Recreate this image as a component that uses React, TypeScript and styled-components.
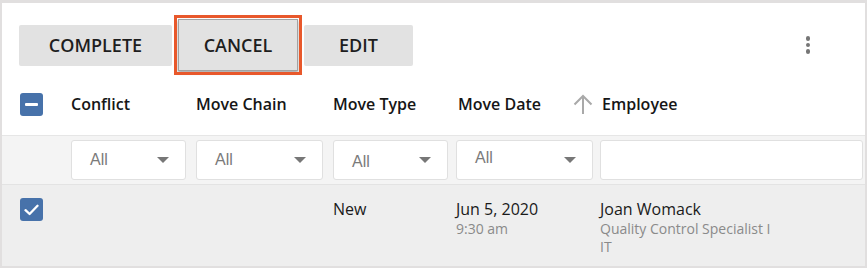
import React from "react";
import styled, { createGlobalStyle } from "styled-components";

const Global = createGlobalStyle`
  html, body { margin: 0; padding: 0; background: #ffffff; }
  body { font-family: "Open Sans", "Liberation Sans", sans-serif; color: #1b1b1b; }
  * { box-sizing: border-box; }
`;

const Frame = styled.div`
  width: 867px;
  height: 268px;
  border: 2px solid #e1dfdf;
  border-top-width: 3px;
  background: #ffffff;
  overflow: hidden;
  display: flex;
  flex-direction: column;
`;

const Toolbar = styled.div`
  display: flex;
  align-items: center;
  gap: 6px;
  height: 77px;
  padding: 16px 0 9px 17px;
`;

const ActionButton = styled.button<{ $focused?: boolean; $w: number }>`
  width: ${(p) => p.$w}px;
  height: ${(p) => (p.$focused ? 52 : 41)}px;
  border-radius: ${(p) => (p.$focused ? 0 : 2)}px;
  border: ${(p) => (p.$focused ? "1px solid #a2a2a2" : "none")};
  background: #e2e2e2;
  font-family: "Open Sans", "Liberation Sans", sans-serif;
  font-weight: 600;
  font-size: 18px;
  color: #1e1e1e;
  padding: 0;
  cursor: pointer;
  box-shadow: ${(p) => (p.$focused ? "0 2px 3px rgba(0,0,0,0.35)" : "none")};
  outline: ${(p) => (p.$focused ? "3px solid #e8582b" : "none")};
  outline-offset: 1px;
`;

const Spacer = styled.div`
  flex: 1;
`;

const Kebab = styled.button`
  width: 24px;
  height: 30px;
  margin-right: 45px;
  border: none;
  background: transparent;
  display: flex;
  flex-direction: column;
  align-items: center;
  justify-content: center;
  gap: 2px;
  padding: 0;
`;

const Dot = styled.span`
  width: 4.5px;
  height: 4.5px;
  border-radius: 50%;
  background: #767676;
`;

const cols = "69px 125px 137px 123px 144px 1fr";

const HeaderRow = styled.div`
  display: grid;
  grid-template-columns: ${cols};
  align-items: center;
  padding: 13px 0 19px;
  border-bottom: 1px solid #e6e6e6;
`;

const CheckCell = styled.div`
  padding-left: 18px;
  display: flex;
`;

const Box = styled.span`
  width: 23px;
  height: 23px;
  border-radius: 3px;
  background: #4772aa;
  display: flex;
  align-items: center;
  justify-content: center;
`;

const HeaderCell = styled.div<{ $indent?: number }>`
  position: relative;
  font-weight: 600;
  font-size: 16px;
  line-height: 23px;
  color: #161616;
  white-space: nowrap;
  padding-left: ${(p) => p.$indent ?? 0}px;
`;

const SortIcon = styled.span`
  position: absolute;
  left: -28px;
  top: 0;
  display: flex;
`;

const FilterRow = styled.div`
  display: grid;
  grid-template-columns: ${cols};
  background: #f4f4f4;
  padding: 4px 0;
  border-bottom: 1px solid #e3e3e3;
`;

const FilterCell = styled.div<{ $gap: number }>`
  padding-right: ${(p) => p.$gap}px;
`;

const Select = styled.div`
  height: 40px;
  background: #ffffff;
  border: 1px solid #e0e0e0;
  border-radius: 3px;
  display: flex;
  align-items: center;
  justify-content: space-between;
  padding: 0 16px 0 18px;
  font-family: "Liberation Sans", Arial, sans-serif;
  font-size: 16px;
  color: #7a7a7a;
`;

const SelectValue = styled.span<{ $shift: number }>`
  transform: translateY(${(p) => p.$shift}px);
`;

const Caret = styled.span`
  width: 0;
  height: 0;
  border-left: 6.5px solid transparent;
  border-right: 6.5px solid transparent;
  border-top: 6px solid #777777;
`;

const DataRow = styled.div`
  flex: 1;
  display: grid;
  grid-template-columns: ${cols};
  align-items: start;
  background: #eeeeee;
  padding-top: 13px;
`;

const DataCell = styled.div`
  font-size: 16px;
  line-height: 22px;
  color: #1a1a1a;
  white-space: nowrap;
`;

const SubLine = styled.div`
  font-size: 14px;
  line-height: 18px;
  color: #8a8a8a;
`;

const Minus = () => (
  <svg width="13" height="3" viewBox="0 0 13 3">
    <rect width="13" height="3" rx="1" fill="#ffffff" />
  </svg>
);

const Check = () => (
  <svg width="15" height="12" viewBox="0 0 15 12">
    <path d="M1.5 6.2 L5.6 10 L13.5 1.8" fill="none" stroke="#ffffff" strokeWidth="2.3" strokeLinecap="round" strokeLinejoin="round" />
  </svg>
);

const ArrowUp = () => (
  <svg width="22" height="23" viewBox="0 0 22 23">
    <path d="M11 21 V3 M2.5 11.5 L11 3 L19.5 11.5" fill="none" stroke="#a9a9a9" strokeWidth="2" />
  </svg>
);

const filters: { gap: number; text?: string; shift: number }[] = [
  { gap: 10, text: "All", shift: 0 },
  { gap: 10, text: "All", shift: 0 },
  { gap: 8, text: "All", shift: 2 },
  { gap: 7, text: "All", shift: -2 },
  { gap: 2, shift: 0 },
];

export default function App() {
  return (
    <>
      <Global />
      <Frame>
        <Toolbar>
          <ActionButton $w={153}>COMPLETE</ActionButton>
          <ActionButton $w={120} $focused>CANCEL</ActionButton>
          <ActionButton $w={109}>EDIT</ActionButton>
          <Spacer />
          <Kebab aria-label="More">
            <Dot />
            <Dot />
            <Dot />
          </Kebab>
        </Toolbar>
        <HeaderRow>
          <CheckCell>
            <Box>
              <Minus />
            </Box>
          </CheckCell>
          <HeaderCell>Conflict</HeaderCell>
          <HeaderCell>Move Chain</HeaderCell>
          <HeaderCell>Move Type</HeaderCell>
          <HeaderCell $indent={2}>Move Date</HeaderCell>
          <HeaderCell $indent={2}>
            <SortIcon>
              <ArrowUp />
            </SortIcon>
            Employee
          </HeaderCell>
        </HeaderRow>
        <FilterRow>
          <div />
          {filters.map((f, i) => (
            <FilterCell key={i} $gap={f.gap}>
              <Select>
                {f.text ? (
                  <>
                    <SelectValue $shift={f.shift}>{f.text}</SelectValue>
                    <Caret />
                  </>
                ) : null}
              </Select>
            </FilterCell>
          ))}
        </FilterRow>
        <DataRow>
          <CheckCell>
            <Box>
              <Check />
            </Box>
          </CheckCell>
          <DataCell />
          <DataCell />
          <DataCell>New</DataCell>
          <DataCell>
            Jun 5, 2020
            <SubLine>9:30 am</SubLine>
          </DataCell>
          <DataCell>
            Joan Womack
            <SubLine>Quality Control Specialist I</SubLine>
            <SubLine>IT</SubLine>
          </DataCell>
        </DataRow>
      </Frame>
    </>
  );
}
